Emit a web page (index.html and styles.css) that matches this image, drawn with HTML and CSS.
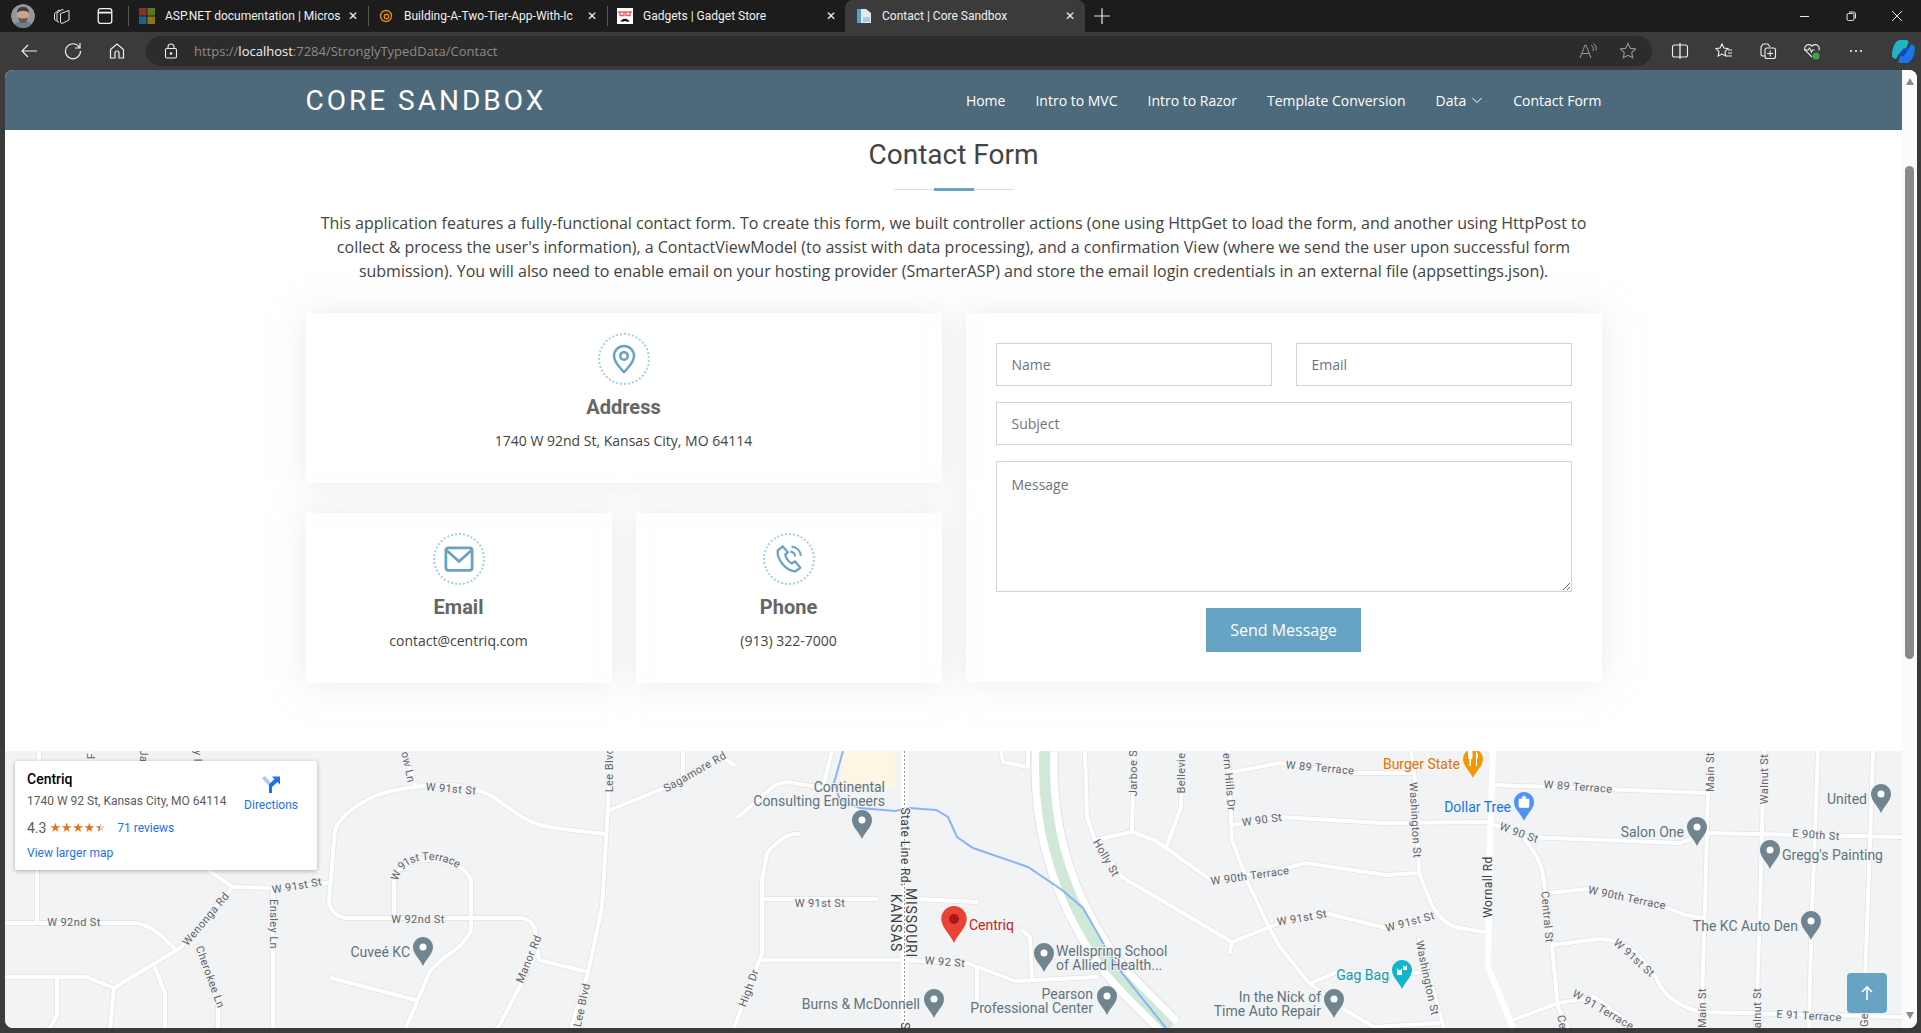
FILE: index.html
```html
<!DOCTYPE html>
<html lang="en">
<head>
    <meta charset="UTF-8">
    <meta name="viewport" content="width=device-width, initial-scale=1.0">
    <title>Contact | Core Sandbox</title>
    <link rel="stylesheet" href="styles.css">
</head>
<body>
    <!-- browser tab strip -->
    <div class="tabstrip">
        <div class="strip-left">
            <svg class="avatar" viewBox="0 0 24 24">
                <circle cx="12" cy="12" r="12" fill="#8d9aa3"/>
                <path d="M2 24c1-6 6-7 10-7s9 1 10 7z" fill="#6d7f8c"/>
                <ellipse cx="12" cy="11" rx="6" ry="7" fill="#c9a58c"/>
                <path d="M6 9c0-5 3-6 6-6s6 1 6 6c-2-3-10-3-12 0z" fill="#4a3a30"/>
                <path d="M7 13c1 5 3 6 5 6s4-1 5-6c-2 2-8 2-10 0z" fill="#6b5545"/>
            </svg>
            <svg class="chrome-icon workspaces" viewBox="0 0 18 18" fill="none" stroke="#e6e6e6" stroke-linejoin="round">
                <path d="M1.500 6.500L6 3l1 .5M1.500 6.500v6l2 1.500"/>
                <path d="M4 6L9 2.500l1.500.5M4 6v8l2 1.500"/>
                <path d="M7.500 6.500L16 3.500v9.500l-7 3.500-1.500-1z"/>
            </svg>
            <svg class="chrome-icon tabactions" viewBox="0 0 16 16" fill="none" stroke="#f0f0f0" stroke-width="1.2">
                <rect x="2" y="1.500" width="12" height="13" rx="2"/>
                <path d="M2 5h12" stroke-width="1.600"/>
            </svg>
            <span class="divider"></span>
        </div>
        <div class="tab">
            <svg class="favicon" viewBox="0 0 16 16">
                <rect width="7.500" height="7.500" fill="#8a3324"/>
                <rect x="8.500" width="7.500" height="7.500" fill="#5a7a1e"/>
                <rect y="8.500" width="7.500" height="7.500" fill="#18648c"/>
                <rect x="8.500" y="8.500" width="7.500" height="7.500" fill="#8f7414"/>
            </svg>
            <span class="tab-title">ASP.NET documentation | Micros</span>
            <span class="tab-close">&#10005;</span>
        </div>
        <span class="divider"></span>
        <div class="tab">
            <svg class="favicon" viewBox="0 0 16 16" fill="none" stroke="#e08a1e" stroke-width="1.400">
                <circle cx="8" cy="8" r="5.500"/>
                <circle cx="8.500" cy="8.500" r="2.200"/>
            </svg>
            <span class="tab-title">Building-A-Two-Tier-App-With-Ic</span>
            <span class="tab-close">&#10005;</span>
        </div>
        <span class="divider"></span>
        <div class="tab">
            <svg class="favicon" viewBox="0 0 16 16">
                <rect width="16" height="16" fill="#fff"/>
                <path d="M1 4h14M3 4v3.500h4V4M9 4v3.500h4V4" fill="none" stroke="#ef5a6a" stroke-width="1.400"/>
                <path d="M3 13c2 0 3-3 5-2 2-1 3 2 5 2-2 1-3 1-5 0-2 1-3 1-5 0z" fill="#111"/>
            </svg>
            <span class="tab-title">Gadgets | Gadget Store</span>
            <span class="tab-close">&#10005;</span>
        </div>
        <div class="tab tab-active">
            <svg class="favicon" viewBox="0 0 16 16">
                <path d="M1 1h9l5 4v10H1z" fill="#dfe9f2"/>
                <path d="M1 1h4v14H1z" fill="#5a9bd0"/>
                <path d="M7 9h7v5H7z" fill="#b6c6d4"/>
            </svg>
            <span class="tab-title">Contact | Core Sandbox</span>
            <span class="tab-close">&#10005;</span>
        </div>
        <svg class="chrome-icon newtab" viewBox="0 0 16 16" stroke="#e6e6e6" stroke-width="1.100"><path d="M8 1v14M1 8h14"/></svg>
        <div class="window-controls">
            <svg viewBox="0 0 12 12" stroke="#e6e6e6"><path d="M1 6.500h9"/></svg>
            <svg viewBox="0 0 12 12" stroke="#e6e6e6" fill="none"><rect x="2" y="3.500" width="7" height="7" rx="1.500"/><path d="M4 2h4.500A2 2 0 0 1 10.500 4v4.500"/></svg>
            <svg viewBox="0 0 12 12" stroke="#e6e6e6"><path d="M1 1l10 10M11 1L1 11"/></svg>
        </div>
    </div>

    <!-- browser toolbar -->
    <div class="toolbar">
        <svg class="tool-icon back" viewBox="0 0 18 18" fill="none" stroke="#eee" stroke-width="1.200"><path d="M17 9H2M8 3L2 9l6 6"/></svg>
        <svg class="tool-icon reload" viewBox="0 0 18 18" fill="none" stroke="#eee" stroke-width="1.200"><path d="M15.500 5.500A7.500 7.500 0 1 0 16.500 9M16 1v5h-5"/></svg>
        <svg class="tool-icon home" viewBox="0 0 18 18" fill="none" stroke="#eee" stroke-width="1.200"><path d="M2.500 7.500L9 2l6.500 5.500V16H11v-5a2 2 0 0 0-4 0v5H2.500z"/></svg>
        <div class="addressbar">
            <svg class="lock" viewBox="0 0 14 16" fill="none" stroke="#eee" stroke-width="1.100"><rect x="1.500" y="5.500" width="11" height="9.500" rx="1.500"/><path d="M4 5.500V4a3 3 0 0 1 6 0v1.500"/><circle cx="7" cy="10.500" r=".8" fill="#eee"/></svg>
            <span class="url">https://<b>localhost</b>:7284/StronglyTypedData/Contact</span>
            <svg class="bar-icon" viewBox="0 0 18 18" fill="none" stroke="#999" stroke-width="1"><path d="M1 16L6 3h1l5 13M3 11.500h7M12 3c2 1 3 3 2 6M14.500 1.500c2.500 2 3 4 2.500 7"/></svg>
            <svg class="bar-icon" viewBox="0 0 18 18" fill="none" stroke="#999" stroke-width="1.100"><path d="M9 1.500l2.300 4.800 5.200.7-3.800 3.600 1 5.200L9 13.300l-4.700 2.500 1-5.200L1.500 7l5.200-.7z"/></svg>
        </div>
        <div class="tool-right">
            <svg viewBox="0 0 18 18" fill="none" stroke="#eee" stroke-width="1.100"><rect x="1.500" y="3" width="15" height="12" rx="2"/><path d="M9 1v16" stroke-width="1.300"/></svg>
            <svg viewBox="0 0 18 18" fill="none" stroke="#eee" stroke-width="1.100"><path d="M7 2l2 4 4 .6-3 3 .8 4.400L7 12l-3.800 2 .8-4.400-3-3 4-.6zM13 8h4M13 11h4M11 14h6"/></svg>
            <svg viewBox="0 0 18 18" fill="none" stroke="#eee" stroke-width="1.100"><path d="M6 14H4a2 2 0 0 1-2-2V5l2-3h5l2 3"/><rect x="6" y="6" width="10.500" height="10.500" rx="2"/><path d="M11.200 8.500v6M8.200 11.500h6"/></svg>
            <svg viewBox="0 0 18 18" fill="none" stroke="#eee" stroke-width="1.100"><path d="M9 15L2.500 8.500C0 5 4.500 0.500 9 4c4.500-3.500 9 1 6.500 4.500"/><path d="M1 8h4l1.500-2 2 4 1-2h2"/><circle cx="13" cy="14" r="3.500" fill="#3fa34d" stroke="none"/></svg>
            <svg viewBox="0 0 18 18" fill="#eee"><circle cx="4" cy="9" r="1.100"/><circle cx="9" cy="9" r="1.100"/><circle cx="14" cy="9" r="1.100"/></svg>
            <svg class="copilot" viewBox="0 0 24 24">
                <path d="M9 1h6c1 0 2 1 2 2l-5 12H7l-2 4c-2 0-4-1-4-3 0-7 3-15 8-15z" fill="#1fb5c4"/>
                <path d="M15 23H9c-1 0-2-1-2-2l5-12h5l2-4c2 0 4 1 4 3 0 7-3 15-8 15z" fill="#1b74e8"/>
                <path d="M7 15l5-6h5l-5 8z" fill="#1447b8"/>
            </svg>
        </div>
    </div>

    <div class="window">
        <div class="page">
            <header class="navbar">
                <div class="nav-inner">
                    <a class="brand" href="#">CORE SANDBOX</a>
                    <nav class="nav-links">
                        <a href="#">Home</a>
                        <a href="#">Intro to MVC</a>
                        <a href="#">Intro to Razor</a>
                        <a href="#">Template Conversion</a>
                        <a href="#" class="has-caret">Data
                            <svg viewBox="0 0 12 12" fill="none" stroke="#fff" stroke-width="1"><path d="M1.500 4L6 8.500 10.500 4"/></svg>
                        </a>
                        <a href="#">Contact Form</a>
                    </nav>
                </div>
            </header>

            <section class="contact">
                <h2>Contact Form</h2>
                <div class="title-rule"></div>
                <p class="intro">This application features a fully-functional contact form. To create this form, we built controller actions (one using HttpGet to load the form, and another using HttpPost to collect &amp; process the user's information), a ContactViewModel (to assist with data processing), and a confirmation View (where we send the user upon successful form submission). You will also need to enable email on your hosting provider (SmarterASP) and store the email login credentials in an external file (appsettings.json).</p>

                <div class="contact-grid">
                    <div class="info-grid">
                        <div class="info-box info-wide">
                            <div class="info-icon">
                                <svg viewBox="0 0 24 24" fill="none" stroke="#67a4c4" stroke-width="2"><path d="M12 22.500S4 15 4 9.500a8 8 0 0 1 16 0C20 15 12 22.500 12 22.500z"/><circle cx="12" cy="9.500" r="3"/></svg>
                            </div>
                            <h3>Address</h3>
                            <p>1740 W 92nd St, Kansas City, MO 64114</p>
                        </div>
                        <div class="info-box">
                            <div class="info-icon">
                                <svg viewBox="0 0 24 24" fill="none" stroke="#67a4c4" stroke-width="2.200"><rect x="1.500" y="3" width="21" height="18" rx="2"/><path d="M2 5l10 9 10-9"/></svg>
                            </div>
                            <h3>Email</h3>
                            <p>contact@centriq.com</p>
                        </div>
                        <div class="info-box">
                            <div class="info-icon">
                                <svg viewBox="0 0 24 24" fill="none" stroke="#67a4c4" stroke-width="1.800"><path d="M7 2L3 5c-1 7 6 16 14 17l4-3-4-5-3 1.500C11.500 14 9.500 11 9 8.500l2-2z"/><path d="M13 6c2 0 4 2 4 4M14 2c4 .5 7 3.500 7.500 7.500"/></svg>
                            </div>
                            <h3>Phone</h3>
                            <p>(913) 322-7000</p>
                        </div>
                    </div>

                    <form class="contact-form">
                        <div class="form-row">
                            <input type="text" placeholder="Name">
                            <input type="text" placeholder="Email">
                        </div>
                        <input type="text" placeholder="Subject">
                        <textarea placeholder="Message"></textarea>
                        <button type="button">Send Message</button>
                    </form>
                </div>
            </section>

            <section class="map">
                <svg class="map-canvas" viewBox="5 751 1897 277" width="1897" height="277">
                    <defs>
                        <g id="roads" fill="none" stroke-linejoin="round" stroke-linecap="round">
                            <path d="M604 834L555 828Q535 825 522 817L490 795Q460 780 416 787Q385 790 367 800Q340 815 335 830L329 900Q330 915 345 918L522 918Q533 920 535 930L539 960"/>
                            <path d="M327 883L273 888L233 887L208 870"/>
                            <path d="M273 888V1028M233 887L180 948L114 988M5 923H135Q150 925 163 937L176 950M37 870V923"/>
                            <path d="M5 977H86L114 988L110 1028M57 977V1015L50 1028M155 968L165 993V1028M196 947L218 1003V1028"/>
                            <path d="M394 918V883Q396 868 408 863Q433 855 461 868Q471 875 471 883V930Q465 945 445 957Q432 968 429 973L406 1028M331 978L416 1000"/>
                            <path d="M535 957L498 1028M539 960L588 972M610 751L608 807L602 907L588 973L571 1028M610 810L640 798L664 788L722 757L734 765M404 751L416 787"/>
                            <path d="M683 751V777M738 817L775 785L787 782L836 790M832 751L824 783"/>
                            <path d="M764 899H877M918 899L977 902M799 834Q785 832 767 853L762 880V953L734 1028M760 960H901L967 963L1015 981L1097 977M977 967V1003M1022 930L1030 937L1032 978"/>
                            <path d="M1001 751L1003 762L1028 767V751M1085 751L1087 817L1095 840L1122 877L1232 942L1280 923L1325 913L1386 928L1423 923M1230 952L1232 942M1095 840L1132 832M1134 751L1132 832L1154 840L1166 848L1211 880L1280 870L1305 863L1386 875L1419 873M1183 751L1181 807L1166 848"/>
                            <path d="M1228 751L1232 840L1248 883L1269 927L1280 947L1309 983L1345 1010L1374 1027L1439 1023M1232 772L1280 763L1349 773H1411M1232 825L1280 817L1382 823L1488 822L1525 837L1681 843L1705 833L1901 837"/>
                            <path d="M1411 751L1415 780L1419 873L1431 903Q1442 925 1460 928L1484 932M1419 940L1444 1028M1311 983L1337 972L1419 973M1495 785L1707 793"/>
                            <path d="M1709 751L1705 907L1701 1028M1764 751L1760 907L1756 1028M1818 751L1811 940L1809 1028M1873 751L1869 873L1865 980"/>
                            <path d="M1525 840Q1538 855 1542 870L1548 907L1558 1007L1568 1028M1548 893L1587 889L1648 900L1685 915L1703 918M1552 945L1599 939Q1625 940 1640 957L1656 977Q1665 1003 1701 1012L1901 1017M1513 1020L1558 1003L1595 997L1636 1028"/>
                            <path d="M39 751V762M91 751V762M143 751V762M197 751V762"/>
                        </g>
                        <symbol id="pin" viewBox="0 0 20 29">
                            <path d="M10 0C4.500 0 0 4.500 0 10c0 7 7 12 10 19 3-7 10-12 10-19C20 4.500 15.500 0 10 0z"/>
                        </symbol>
                        <path id="terrace-curve" d="M394 880Q400 855 432 856Q460 858 472 878"/>
                        <path id="highway" d="M1045 751C1042 810 1055 870 1085 925S1140 995 1170 1028"/>
                    </defs>

                    <rect x="5" y="751" width="1897" height="277" fill="#f2f3f5"/>
                    <path d="M842 751H895V788H840z" fill="#fdf6e3"/>

                    <use href="#roads" class="road-edge"/>
                    <use href="#roads" class="road-fill"/>

                    <!-- highway and the creek -->
                    <use href="#highway" class="hw-edge"/>
                    <use href="#highway" class="hw-road"/>
                    <use href="#highway" class="hw-green"/>
                    <path class="major" d="M904.500 751V1028"/>
                    <path class="stateline" d="M904.500 751V1028"/>
                    <path class="major" d="M1493 751L1490 840L1488 967L1513 1028"/>
                    <path class="creek" d="M843 751L834 783L840 800L860 808L895 811L909 808L936 810L948 817L957 837L973 848L1028 867L1062 890L1083 908L1103 943L1122 973L1166 1028"/>

                    <!-- street names -->
                    <g class="street">
                        <text transform="translate(451 789) rotate(5)">W 91st St</text>
                        <text transform="translate(297 886) rotate(-10)">W 91st St</text>
                        <text x="74" y="922">W 92nd St</text>
                        <text x="418" y="919">W 92nd St</text>
                        <text transform="translate(206 919) rotate(-50)">Wenonga Rd</text>
                        <text transform="translate(210 977) rotate(70)">Cherokee Ln</text>
                        <text transform="translate(273 924) rotate(90)">Ensley Ln</text>
                        <text><textPath href="#terrace-curve">W 91st Terrace</textPath></text>
                        <text transform="translate(529 959) rotate(-68)">Manor Rd</text>
                        <text transform="translate(582 1005) rotate(-78)">Lee Blvd</text>
                        <text transform="translate(609 770) rotate(-90)">Lee Blvd</text>
                        <text transform="translate(408 767) rotate(78)">ow Ln</text>
                        <text transform="translate(91 756) rotate(-90)">F</text>
                        <text transform="translate(143 756) rotate(90)">Ja</text>
                        <text transform="translate(197 756) rotate(90)">y l</text>
                        <text transform="translate(695 772) rotate(-30)">Sagamore Rd</text>
                        <text x="820" y="903">W 91st St</text>
                        <text transform="translate(945 962) rotate(4)">W 92 St</text>
                        <text transform="translate(749 988) rotate(-70)">High Dr</text>
                        <text transform="translate(1106 858) rotate(60)">Holly St</text>
                        <text transform="translate(1133 773) rotate(-90)">Jarboe S</text>
                        <text transform="translate(1181 773) rotate(-90)">Bellevie</text>
                        <text transform="translate(1229 782) rotate(85)">ern Hills Dr</text>
                        <text transform="translate(1262 820) rotate(-8)">W 90 St</text>
                        <text transform="translate(1250 876) rotate(-8)">W 90th Terrace</text>
                        <text transform="translate(1302 918) rotate(-10)">W 91st St</text>
                        <text transform="translate(1320 768) rotate(5)">W 89 Terrace</text>
                        <text transform="translate(1415 820) rotate(87)">Washington St</text>
                        <text transform="translate(1410 922) rotate(-15)">W 91st St</text>
                        <text transform="translate(1427 978) rotate(78)">Washington St</text>
                        <text transform="translate(1578 787) rotate(4)">W 89 Terrace</text>
                        <text transform="translate(1519 833) rotate(20)">W 90 St</text>
                        <text transform="translate(1547 917) rotate(85)">Central St</text>
                        <text transform="translate(1562 1022) rotate(80)">Ce</text>
                        <text transform="translate(1627 898) rotate(12)">W 90th Terrace</text>
                        <text transform="translate(1634 958) rotate(42)">W 91st St</text>
                        <text transform="translate(1603 1010) rotate(30)">W 91 Terrace</text>
                        <text transform="translate(1816 835) rotate(4)">E 90th St</text>
                        <text transform="translate(1809 1016) rotate(3)">E 91 Terrace</text>
                        <text transform="translate(1710 772) rotate(-90)">Main St</text>
                        <text transform="translate(1702 1008) rotate(-90)">Main St</text>
                        <text transform="translate(1764 779) rotate(-90)">Walnut St</text>
                        <text transform="translate(1757 1008) rotate(-90)">alnut St</text>
                        <text transform="translate(1864 1020) rotate(-90)">Ge</text>
                    </g>
                    <g class="street street-dark">
                        <text transform="translate(905 847) rotate(90)">State Line Rd.</text>
                        <text transform="translate(905 1026) rotate(90)">S</text>
                        <text class="state" transform="translate(911 923) rotate(90)">MISSOURI</text>
                        <text class="state" transform="translate(896 923) rotate(90)">KANSAS</text>
                        <text transform="translate(1488 887) rotate(-90)">Wornall Rd</text>
                    </g>

                    <!-- places -->
                    <g class="pins">
                        <use href="#pin" x="413" y="937" width="20" height="29"/>
                        <use href="#pin" x="852" y="810" width="20" height="29"/>
                        <use href="#pin" x="1034" y="943" width="20" height="29"/>
                        <use href="#pin" x="924" y="989" width="20" height="29"/>
                        <use href="#pin" x="1097" y="986" width="20" height="29"/>
                        <use href="#pin" x="1871" y="784" width="20" height="29"/>
                        <use href="#pin" x="1687" y="817" width="20" height="29"/>
                        <use href="#pin" x="1760" y="840" width="20" height="29"/>
                        <use href="#pin" x="1801" y="911" width="20" height="29"/>
                        <use href="#pin" x="1324" y="989" width="20" height="29"/>
                    </g>
                    <g fill="#fff">
                        <circle cx="423" cy="947" r="3.500"/>
                        <circle cx="862" cy="820" r="3.500"/>
                        <circle cx="1044" cy="953" r="3.500"/>
                        <circle cx="934" cy="999" r="3.500"/>
                        <circle cx="1107" cy="996" r="3.500"/>
                        <circle cx="1881" cy="794" r="3.500"/>
                        <circle cx="1697" cy="827" r="3.500"/>
                        <circle cx="1770" cy="850" r="3.500"/>
                        <circle cx="1811" cy="921" r="3.500"/>
                        <circle cx="1334" cy="999" r="3.500"/>
                    </g>
                    <use href="#pin" x="941" y="906" width="26" height="37" fill="#ea4335"/>
                    <circle cx="954" cy="919" r="5" fill="#a61b14"/>
                    <use href="#pin" x="1463" y="749" width="20" height="29" fill="#f29900"/>
                    <path d="M1468 751v6q0 2 1.500 2.500V766h1.500v-6.500q1.500-.5 1.500-2.500v-6zM1476 751q2 2 2 7h-1v8h-1z" fill="#fff"/>
                    <use href="#pin" x="1514" y="792" width="20" height="29" fill="#5491f5"/>
                    <path d="M1519 799h10v7.500q0 1-1 1h-8q-1 0-1-1zM1522 799q0-3 2-3t2 3" fill="#fff" stroke="#fff" stroke-width=".6"/>
                    <use href="#pin" x="1392" y="960" width="20" height="29" fill="#12b5cb"/>
                    <path d="M1397 968l1.500 2h2l1.500-2v7h-5zM1403 965l1 1.500h2l1-1.500v5h-4z" fill="#fff"/>

                    <g class="poi">
                        <text class="end" x="410" y="952">Cuveé KC</text>
                        <text class="end" x="885" y="787">Continental</text>
                        <text class="end" x="885" y="801">Consulting Engineers</text>
                        <text x="1056" y="951">Wellspring School</text>
                        <text x="1056" y="965">of Allied Health...</text>
                        <text class="end" x="920" y="1004">Burns &amp; McDonnell</text>
                        <text class="end" x="1093" y="994">Pearson</text>
                        <text class="end" x="1093" y="1008">Professional Center</text>
                        <text class="end" x="1321" y="997">In the Nick of</text>
                        <text class="end" x="1321" y="1011">Time Auto Repair</text>
                        <text class="end" x="1867" y="799">United</text>
                        <text class="end" x="1684" y="832">Salon One</text>
                        <text x="1782" y="855">Gregg's Painting</text>
                        <text class="end" x="1798" y="926">The KC Auto Den</text>
                        <text class="poi-red" x="969" y="925">Centriq</text>
                        <text class="end poi-orange" x="1460" y="764">Burger State</text>
                        <text class="end poi-blue" x="1511" y="807">Dollar Tree</text>
                        <text class="end poi-teal" x="1389" y="975">Gag Bag</text>
                    </g>
                </svg>

                <div class="place-card">
                    <div class="place-info">
                        <div class="place-name">Centriq</div>
                        <div class="place-address">1740 W 92 St, Kansas City, MO 64114</div>
                        <div class="place-rating">
                            <span class="rating-num">4.3</span>
                            <span class="stars">&#9733;&#9733;&#9733;&#9733;&#9733;</span>
                            <a href="#">71 reviews</a>
                        </div>
                        <a class="place-link" href="#">View larger map</a>
                    </div>
                    <a class="directions" href="#">
                        <svg viewBox="0 0 18 18">
                            <path d="M0 3l3-2 6 7-2 3z" fill="#a8c7fa"/>
                            <path d="M7 18V9.500L12.500 4 10 1.500h8v8L15.500 7 10 12v6z" fill="#1a73e8"/>
                        </svg>
                        Directions
                    </a>
                </div>

                <a class="back-top" href="#">
                    <svg viewBox="0 0 16 16" fill="none" stroke="#fff" stroke-width="1.600"><path d="M8 15V2M3 7l5-5 5 5"/></svg>
                </a>
            </section>
        </div>

        <div class="scrollbar">
            <span class="arrow-up"></span>
            <span class="thumb"></span>
            <span class="arrow-down"></span>
        </div>
    </div>
</body>
</html>
```

FILE: styles.css
```css
body {
    margin: 0;
    height: 1033px;
    overflow: hidden;
    background-color: #3b3b3b;
    font-family: "Open Sans", sans-serif;
    color: #444444;
}

a {
    text-decoration: none;
}

/* browser chrome */
.tabstrip {
    display: flex;
    align-items: center;
    height: 32px;
    background-color: #1c1c1c;
    color: #f0f0f0;
    font-family: Roboto, sans-serif;
    font-size: 12px;
}

.strip-left {
    display: flex;
    align-items: center;
    width: 130px;
    flex: none;
}

.avatar {
    width: 24px;
    height: 24px;
    margin-left: 11px;
    border-radius: 50%;
}

.chrome-icon {
    width: 18px;
    height: 18px;
    flex: none;
}

.workspaces {
    margin-left: 18px;
}

.tabactions {
    margin-left: 25px;
}

.divider {
    width: 1px;
    height: 20px;
    flex: none;
    background-color: #555;
}

.strip-left .divider {
    margin-left: 14px;
}

.tab {
    display: flex;
    align-items: center;
    width: 238px;
    height: 32px;
    flex: none;
    padding-left: 9px;
    box-sizing: border-box;
}

.favicon {
    width: 16px;
    height: 16px;
    flex: none;
    margin-right: 10px;
}

.tab-title {
    width: 176px;
    flex: none;
    overflow: hidden;
    white-space: nowrap;
}

.tab-close {
    margin-left: 4px;
    width: 16px;
    font-size: 12px;
    text-align: center;
}

.tab-active {
    width: 240px;
    margin-left: -1px;
    padding-left: 11px;
    background-color: #3b3b3b;
    border-radius: 8px 8px 0 0;
}

.newtab {
    margin-left: 8px;
}

.window-controls {
    display: flex;
    gap: 34px;
    margin-left: auto;
    margin-right: 18px;
}

.window-controls svg {
    width: 12px;
    height: 12px;
}

.toolbar {
    display: flex;
    align-items: center;
    height: 38px;
}

.tool-icon {
    width: 18px;
    height: 18px;
    flex: none;
}

.back {
    margin-left: 20px;
}

.reload {
    margin-left: 26px;
}

.home {
    margin-left: 26px;
}

.addressbar {
    display: flex;
    align-items: center;
    width: 1506px;
    height: 30px;
    margin-left: 20px;
    border-radius: 15px;
    background-color: #2c2c2c;
    flex: none;
}

.lock {
    width: 14px;
    height: 16px;
    margin-left: 18px;
}

.url {
    margin-left: 16px;
    margin-right: auto;
    font-size: 13px;
    color: #8b8b8b;
}

.url b {
    font-weight: 400;
    color: #f0f0f0;
}

.bar-icon {
    width: 18px;
    height: 18px;
    margin-right: 22px;
}

.bar-icon:last-child {
    margin-right: 15px;
}

.tool-right {
    display: flex;
    align-items: center;
    gap: 26px;
    margin-left: 19px;
}

.tool-right svg {
    width: 18px;
    height: 18px;
}

.tool-right .copilot {
    width: 25px;
    height: 25px;
}

/* page window */
.window {
    display: flex;
    height: 958px;
    margin: 0 4px 5px 5px;
    border-radius: 8px;
    overflow: hidden;
    background-color: #fff;
}

.page {
    width: 1897px;
    flex: none;
}

.navbar {
    height: 60px;
    background-color: #4d6a7c;
}

.nav-inner {
    display: flex;
    align-items: center;
    justify-content: space-between;
    width: 1296px;
    height: 60px;
    margin: 0 auto;
}

.brand {
    font-family: Roboto, sans-serif;
    font-size: 28px;
    letter-spacing: 3px;
    color: #fff;
}

.nav-links {
    display: flex;
    align-items: center;
    gap: 30px;
}

.nav-links a {
    font-size: 14px;
    font-weight: 500;
    color: #fff;
}

.has-caret {
    display: flex;
    align-items: center;
    gap: 5px;
}

.has-caret svg {
    width: 12px;
    height: 12px;
}

.contact {
    width: 1296px;
    margin: 0 auto;
    height: 621px;
    padding-top: 6px;
    box-sizing: border-box;
}

h2 {
    margin: 0;
    font-family: Roboto, sans-serif;
    font-size: 28px;
    font-weight: 400;
    line-height: 38px;
    text-align: center;
    color: #444444;
}

.title-rule {
    display: flex;
    align-items: center;
    justify-content: center;
    width: 120px;
    height: 1px;
    margin: 15px auto 21px;
    background-color: #dddddd;
}

.title-rule::after {
    content: "";
    width: 40px;
    height: 3px;
    flex: none;
    background-color: #67a4c4;
}

.intro {
    margin: 0 0 30px;
    font-size: 16px;
    line-height: 24px;
    text-align: center;
}

.contact-grid {
    display: grid;
    grid-template-columns: 636px 636px;
    gap: 24px;
}

.info-grid {
    display: grid;
    grid-template-columns: 306px 306px;
    column-gap: 24px;
    row-gap: 30px;
}

.info-box {
    height: 170px;
    padding-top: 20px;
    box-sizing: border-box;
    text-align: center;
    box-shadow: 0 0 30px rgba(214, 215, 216, 0.5);
}

.info-wide {
    grid-column: span 2;
}

.info-icon {
    display: flex;
    align-items: center;
    justify-content: center;
    width: 52px;
    height: 52px;
    margin: 0 auto;
    box-sizing: border-box;
    border: 2px dotted #a5cfe8;
    border-radius: 50%;
}

.info-icon svg {
    width: 30px;
    height: 30px;
}

.info-box h3 {
    margin: 10px 0 11px;
    font-family: Roboto, sans-serif;
    font-size: 20px;
    font-weight: 700;
    line-height: 24px;
    color: #666666;
}

.info-box p {
    margin: 0;
    font-size: 14px;
    line-height: 21px;
}

.contact-form {
    display: flex;
    flex-direction: column;
    gap: 16px;
    height: 369px;
    padding: 30px;
    box-sizing: border-box;
    box-shadow: 0 0 30px rgba(214, 215, 216, 0.5);
}

.form-row {
    display: flex;
    gap: 24px;
}

.contact-form input,
.contact-form textarea {
    width: 100%;
    height: 43px;
    padding: 10px 15px;
    box-sizing: border-box;
    border: 1px solid #ced4da;
    font-family: "Open Sans", sans-serif;
    font-size: 14px;
    line-height: 21px;
    color: #444444;
}

.contact-form textarea {
    height: 131px;
    padding-top: 12px;
    resize: vertical;
}

.contact-form ::placeholder {
    color: #6c757d;
    opacity: 1;
}

.contact-form button {
    align-self: center;
    width: 155px;
    height: 44px;
    border: none;
    background-color: #67a4c4;
    color: #fff;
    font-family: "Open Sans", sans-serif;
    font-size: 16px;
    cursor: pointer;
}

/* map */
.map {
    position: relative;
    height: 277px;
}

.map-canvas {
    display: block;
}

.road-edge {
    stroke: #e2e3e6;
    stroke-width: 5.5px;
}

.road-fill {
    stroke: #ffffff;
    stroke-width: 4px;
}

.hw-edge,
.hw-road,
.hw-green {
    fill: none;
}

.hw-edge {
    stroke: #e2e3e6;
    stroke-width: 28px;
}

.hw-road {
    stroke: #ffffff;
    stroke-width: 26px;
}

.hw-green {
    stroke: #cfe8d8;
    stroke-width: 11px;
}

.major {
    fill: none;
    stroke: #ffffff;
    stroke-width: 6px;
}

.stateline {
    fill: none;
    stroke: #8c8f94;
    stroke-width: 1px;
    stroke-dasharray: 2 2;
}

.creek {
    fill: none;
    stroke: #8ab4f8;
    stroke-width: 2px;
}

.street text {
    font-family: Roboto, sans-serif;
    font-size: 11px;
    letter-spacing: 0.4px;
    fill: #5f6368;
    stroke: #f2f3f5;
    stroke-width: 2px;
    paint-order: stroke;
    text-anchor: middle;
    dominant-baseline: central;
}

.street text:has(textPath) {
    text-anchor: start;
}

.street-dark text {
    fill: #3c4043;
    font-size: 12px;
}

.street-dark text.state {
    font-size: 14px;
    letter-spacing: 0.8px;
}

.pins {
    fill: #70858f;
}

.poi text {
    font-family: Roboto, sans-serif;
    font-size: 14px;
    fill: #5f7380;
    stroke: #f2f3f5;
    stroke-width: 2px;
    paint-order: stroke;
    dominant-baseline: central;
}

.poi text.end {
    text-anchor: end;
}

.poi text.poi-red {
    fill: #c5221f;
}

.poi text.poi-orange {
    fill: #e37400;
}

.poi text.poi-blue {
    fill: #1a73e8;
}

.poi text.poi-teal {
    fill: #129eaf;
}

.place-card {
    position: absolute;
    top: 10px;
    left: 10px;
    display: flex;
    justify-content: space-between;
    width: 302px;
    height: 109px;
    padding: 10px 19px 0 12px;
    box-sizing: border-box;
    border-radius: 2px;
    background-color: #fff;
    box-shadow: 0 1px 4px rgba(0, 0, 0, 0.3);
    font-family: Roboto, sans-serif;
    font-size: 12px;
    color: #5b5b5b;
}

.place-card a {
    color: #1a73e8;
}

.place-name {
    font-size: 14px;
    font-weight: 500;
    line-height: 16px;
    color: #000;
}

.place-address {
    margin-top: 7px;
    line-height: 14px;
}

.place-rating {
    display: flex;
    align-items: center;
    margin-top: 11px;
    line-height: 18px;
}

.rating-num {
    font-size: 14px;
    margin-right: 3px;
}

.stars {
    margin-right: 11px;
    font-family: "DejaVu Sans", sans-serif;
    font-size: 13px;
    letter-spacing: -0.3px;
    background: linear-gradient(90deg, #e7711b 90%, #d6d6d6 90%);
    -webkit-background-clip: text;
    background-clip: text;
    color: transparent;
}

.place-link {
    display: block;
    margin-top: 9px;
    line-height: 14px;
}

.directions {
    display: flex;
    flex-direction: column;
    align-items: center;
    gap: 5px;
    margin-top: 4px;
    align-self: flex-start;
}

.directions svg {
    width: 18px;
    height: 18px;
}

.back-top {
    position: absolute;
    top: 222px;
    right: 15px;
    display: flex;
    align-items: center;
    justify-content: center;
    width: 40px;
    height: 40px;
    border-radius: 4px;
    background-color: #67a4c4;
}

.back-top svg {
    width: 16px;
    height: 16px;
}

/* page scrollbar */
.scrollbar {
    display: flex;
    flex-direction: column;
    align-items: center;
    width: 15px;
    flex: none;
    background-color: #fbfbfb;
}

.arrow-up {
    margin-top: 8px;
    border-left: 4.5px solid transparent;
    border-right: 4.5px solid transparent;
    border-bottom: 7px solid #8a8a8a;
}

.thumb {
    width: 9px;
    height: 493px;
    margin-top: 81px;
    border-radius: 5px;
    background-color: #8a8a8a;
}

.arrow-down {
    margin-top: auto;
    margin-bottom: 9px;
    border-left: 4.5px solid transparent;
    border-right: 4.5px solid transparent;
    border-top: 7px solid #8a8a8a;
}
```
